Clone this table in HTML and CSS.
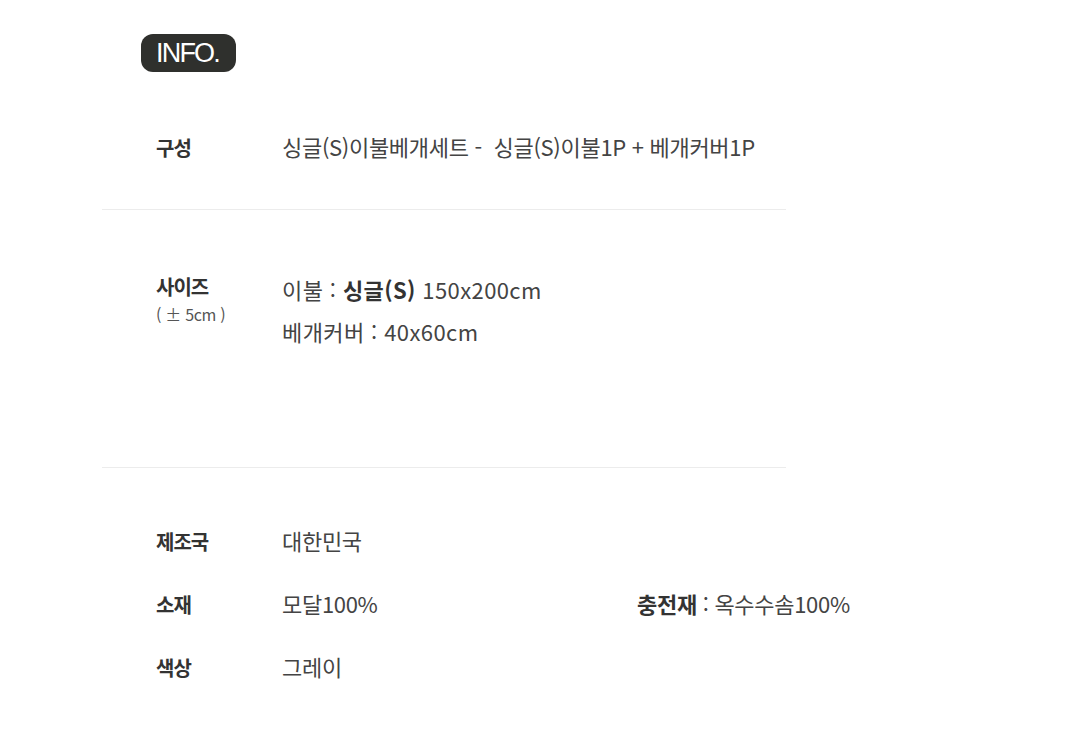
FILE: index.html
```html
<!DOCTYPE html>
<html lang="ko">
<head>
<meta charset="utf-8">
<link rel="stylesheet" href="styles.css">
</head>
<body>
<div class="page">
  <div class="badge">INFO.</div>
  <section class="sec sec-compose">
    <div class="row">
      <div class="label">구성</div>
      <div class="value">싱글(S)이불베개세트 -&nbsp; 싱글(S)이불1P + 베개커버1P</div>
    </div>
  </section>
  <section class="sec sec-size">
    <div class="row">
      <div class="label">사이즈<span class="sub">( ± 5cm )</span></div>
      <div class="value multi">
        <div>이불 : <b class="em">싱글(S)</b> 150x200cm</div>
        <div>베개커버 : 40x60cm</div>
      </div>
    </div>
  </section>
  <section class="sec sec-etc">
    <div class="row">
      <div class="label">제조국</div>
      <div class="value">대한민국</div>
    </div>
    <div class="row">
      <div class="label">소재</div>
      <div class="value narrow">모달100%</div>
      <div class="value"><b class="em">충전재</b> : 옥수수솜100%</div>
    </div>
    <div class="row">
      <div class="label">색상</div>
      <div class="value">그레이</div>
    </div>
  </section>
</div>
</body>
</html>
```
FILE: styles.css
```css
html, body { margin: 0; padding: 0; background: #fff; }
body {
  font-family: "Noto Sans CJK KR", "Noto Sans", sans-serif;
  color: #444;
  width: 1080px;
  height: 742px;
  overflow: hidden;
}
.page { padding-top: 34px; }
.badge {
  margin-left: 141px;
  width: 95px;
  height: 38px;
  border-radius: 12px;
  background: #2f302d;
  color: #fff;
  font-family: "Liberation Sans", Arial, sans-serif;
  font-size: 27px;
  letter-spacing: -1.8px;
  line-height: 38px;
  text-align: center;
  box-sizing: border-box;
  padding-right: 2px;
}
.sec {
  margin-left: 102px;
  width: 684px;
  box-sizing: border-box;
  padding-left: 54px;
}
.sec-compose {
  padding-top: 59px;
  height: 138px;
  border-bottom: 1px solid #ececec;
}
.sec-size {
  padding-top: 59px;
  height: 258px;
  border-bottom: 1px solid #ececec;
}
.sec-etc {
  padding-top: 57px;
  display: flex;
  flex-direction: column;
  gap: 31px;
}
.row { display: flex; align-items: baseline; white-space: nowrap; }
.label {
  width: 126px;
  flex: none;
  font-weight: 700;
  font-size: 20px;
  letter-spacing: -1px;
  color: #333;
  line-height: 30px;
}
.value {
  font-size: 22px;
  letter-spacing: -0.3px;
  line-height: 30px;
  color: #444;
  white-space: nowrap;
}
.value.narrow { width: 355px; flex: none; }
.value.multi { line-height: 42px; margin-top: -1px; letter-spacing: 0.4px; }
.em { font-weight: 700; color: #333; }
.sec-size .label { line-height: 26px; align-self: flex-start; margin-top: 5px; }
.sub {
  display: block;
  font-weight: 400;
  font-size: 16px;
  letter-spacing: -0.3px;
  color: #555;
  line-height: 28px;
}
```
